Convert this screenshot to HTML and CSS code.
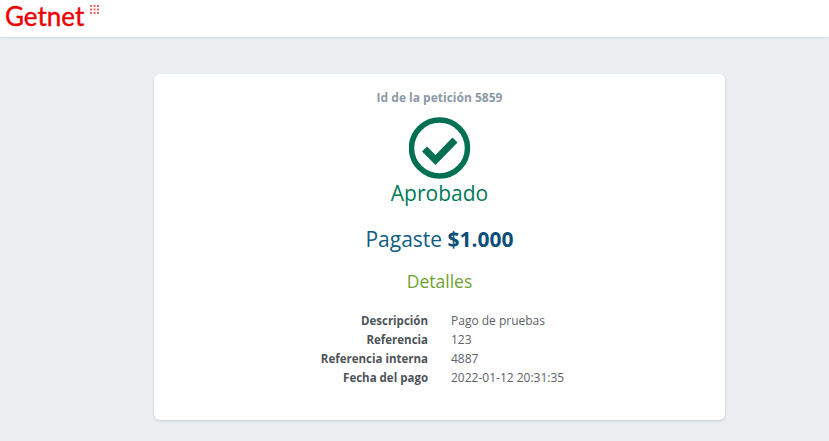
FILE: index.html
```html
<!DOCTYPE html>
<html lang="es">
<head>
<meta charset="utf-8">
<title>Getnet</title>
<link rel="stylesheet" href="styles.css">
</head>
<body>
<header class="topbar">
  <div class="logo">
    <span class="logo-text">Getnet</span>
    <svg class="logo-dots" width="9" height="9" viewBox="0 0 9 9" fill="#ec0000" opacity="0.6">
      <rect x="0" y="0" width="2" height="2"/><rect x="3.5" y="0" width="2" height="2"/><rect x="7" y="0" width="2" height="2"/>
      <rect x="0" y="3.5" width="2" height="2"/><rect x="3.5" y="3.5" width="2" height="2"/><rect x="7" y="3.5" width="2" height="2"/>
      <rect x="0" y="7" width="2" height="2"/><rect x="3.5" y="7" width="2" height="2"/><rect x="7" y="7" width="2" height="2"/>
    </svg>
  </div>
</header>
<main class="page">
  <section class="card">
    <p class="request-id">Id de la petición 5859</p>
    <svg class="status-icon" width="62" height="62" viewBox="0 0 62 62" fill="none" stroke="#006f52">
      <circle cx="30.500" cy="31" r="28" stroke-width="5.5"/>
      <path d="M15.500 32 L26.500 43 L46 23" stroke-width="7"/>
    </svg>
    <h1 class="status">Aprobado</h1>
    <h2 class="amount">Pagaste <strong>$1.000</strong></h2>
    <h3 class="details-title">Detalles</h3>
    <dl class="details">
      <dt>Descripción</dt><dd>Pago de pruebas</dd>
      <dt>Referencia</dt><dd>123</dd>
      <dt>Referencia interna</dt><dd>4887</dd>
      <dt>Fecha del pago</dt><dd>2022-01-12 20:31:35</dd>
    </dl>
  </section>
</main>
</body>
</html>
```
FILE: styles.css
```css
* { box-sizing: border-box; }
html, body { margin: 0; height: 100%; }
body {
  background: #ebeff2;
  font-family: "Open Sans", "Noto Sans", sans-serif;
  display: flex;
  flex-direction: column;
}
.topbar {
  height: 37px;
  background: #fff;
  box-shadow: 0 1px 2px rgba(0, 0, 0, 0.08);
  flex: none;
  padding-left: 5px;
}
.logo { display: flex; align-items: flex-start; gap: 6px; }
.logo-text {
  font-family: "Lato", sans-serif;
  font-size: 26px;
  font-weight: 400;
  line-height: 32px;
  color: #ec0000;
  -webkit-text-stroke: 0.4px #ec0000;
}
.logo-dots { margin-top: 5px; }
.page {
  flex: 1;
  display: flex;
  justify-content: center;
  padding: 37px 0 0 50px;
}
.card {
  width: 571px;
  height: 346px;
  background: #fff;
  border-radius: 6px;
  box-shadow: 0 1px 3px rgba(0, 0, 0, 0.16);
  display: flex;
  flex-direction: column;
  align-items: center;
  padding-top: 15px;
}
.request-id {
  margin: 0;
  font-size: 12px;
  line-height: 18px;
  font-weight: 700;
  color: #8d99a6;
}
.status-icon { margin-top: 10px; display: block; flex: none; }
.status {
  margin: 0;
  font-size: 21px;
  line-height: 29px;
  font-weight: 400;
  color: #007a5a;
}
.amount {
  margin: 16px 0 0;
  font-size: 21px;
  line-height: 30px;
  font-weight: 400;
  color: #0f5c85;
}
.amount strong { font-weight: 700; color: #0b4f78; }
.details-title {
  margin: 14px 0 0;
  font-size: 17.5px;
  line-height: 26px;
  font-weight: 400;
  color: #6ea22f;
}
.details {
  margin: 17px 0 0;
  display: grid;
  grid-template-columns: 274px 1fr;
  column-gap: 23px;
  width: 100%;
  font-size: 11.5px;
  line-height: 19px;
  color: #4d5359;
}
.details dt { font-weight: 700; text-align: right; }
.details dd { margin: 0; color: #5c6268; font-size: 12px; }
```
